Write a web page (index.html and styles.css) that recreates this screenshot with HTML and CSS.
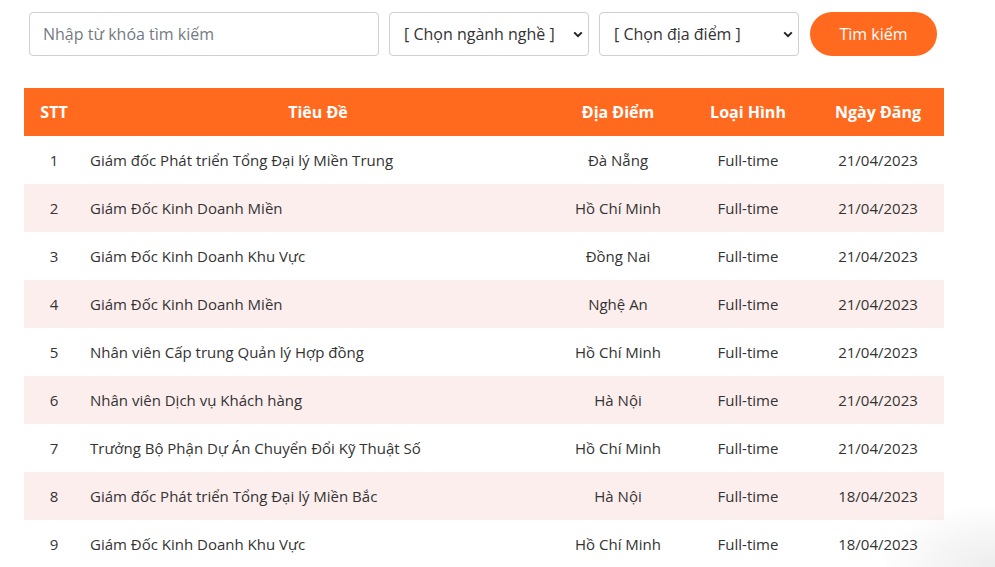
FILE: index.html
```html
<!DOCTYPE html>
<html lang="vi">
<head>
<meta charset="utf-8">
<title>Tuyển dụng</title>
<link rel="stylesheet" href="styles.css">
</head>
<body>
<div class="page">
  <form class="search">
    <input class="field keyword" type="text" placeholder="Nhập từ khóa tìm kiếm">
    <select class="field pick">
      <option>[ Chọn ngành nghề ]</option>
    </select>
    <select class="field pick">
      <option>[ Chọn địa điểm ]</option>
    </select>
    <button class="btn" type="button">Tìm kiếm</button>
  </form>

  <table class="jobs">
    <thead>
      <tr>
        <th class="c-stt">STT</th>
        <th class="c-title">Tiêu Đề</th>
        <th class="c-loc">Địa Điểm</th>
        <th class="c-type">Loại Hình</th>
        <th class="c-date">Ngày Đăng</th>
      </tr>
    </thead>
    <tbody>
      <tr><td class="c-stt">1</td><td class="c-title">Giám đốc Phát triển Tổng Đại lý Miền Trung</td><td class="c-loc">Đà Nẵng</td><td class="c-type">Full-time</td><td class="c-date">21/04/2023</td></tr>
      <tr><td class="c-stt">2</td><td class="c-title">Giám Đốc Kinh Doanh Miền</td><td class="c-loc">Hồ Chí Minh</td><td class="c-type">Full-time</td><td class="c-date">21/04/2023</td></tr>
      <tr><td class="c-stt">3</td><td class="c-title">Giám Đốc Kinh Doanh Khu Vực</td><td class="c-loc">Đồng Nai</td><td class="c-type">Full-time</td><td class="c-date">21/04/2023</td></tr>
      <tr><td class="c-stt">4</td><td class="c-title">Giám Đốc Kinh Doanh Miền</td><td class="c-loc">Nghệ An</td><td class="c-type">Full-time</td><td class="c-date">21/04/2023</td></tr>
      <tr><td class="c-stt">5</td><td class="c-title">Nhân viên Cấp trung Quản lý Hợp đồng</td><td class="c-loc">Hồ Chí Minh</td><td class="c-type">Full-time</td><td class="c-date">21/04/2023</td></tr>
      <tr><td class="c-stt">6</td><td class="c-title">Nhân viên Dịch vụ Khách hàng</td><td class="c-loc">Hà Nội</td><td class="c-type">Full-time</td><td class="c-date">21/04/2023</td></tr>
      <tr><td class="c-stt">7</td><td class="c-title">Trưởng Bộ Phận Dự Án Chuyển Đổi Kỹ Thuật Số</td><td class="c-loc">Hồ Chí Minh</td><td class="c-type">Full-time</td><td class="c-date">21/04/2023</td></tr>
      <tr><td class="c-stt">8</td><td class="c-title">Giám đốc Phát triển Tổng Đại lý Miền Bắc</td><td class="c-loc">Hà Nội</td><td class="c-type">Full-time</td><td class="c-date">18/04/2023</td></tr>
      <tr><td class="c-stt">9</td><td class="c-title">Giám Đốc Kinh Doanh Khu Vực</td><td class="c-loc">Hồ Chí Minh</td><td class="c-type">Full-time</td><td class="c-date">18/04/2023</td></tr>
    </tbody>
  </table>
</div>
<div class="corner-shadow"></div>
</body>
</html>
```

FILE: styles.css
```css
html, body {
  margin: 0;
  padding: 0;
  background: #ffffff;
}

body {
  font-family: "Open Sans", "Liberation Sans", sans-serif;
  color: #333333;
  overflow: hidden;
  height: 567px;
  position: relative;
}

.page {
  padding: 12px 0 0 24px;
  height: 555px;
  overflow: hidden;
}

.search {
  display: flex;
  gap: 10px;
  margin: 0 0 32px 5px;
  height: 44px;
}

.field {
  box-sizing: border-box;
  height: 44px;
  border: 1px solid #cfcfcf;
  border-radius: 4px;
  background-color: #fff;
  font-family: "Open Sans", "Liberation Sans", sans-serif;
  font-size: 16px;
  color: #333;
  outline: none;
  margin: 0;
}

.keyword {
  width: 350px;
  padding: 0 13px;
}

.keyword::placeholder {
  color: #737b82;
}

.pick {
  width: 200px;
  padding: 0 30px 0 14px;
  appearance: none;
  -webkit-appearance: none;
  background-image: url("data:image/svg+xml,%3Csvg xmlns='http://www.w3.org/2000/svg' width='10' height='7' viewBox='0 0 10 7'%3E%3Cpath d='M1.2 1.4 L5 5.2 L8.8 1.4' fill='none' stroke='%23222' stroke-width='2'/%3E%3C/svg%3E");
  background-repeat: no-repeat;
  background-position: right 5px center;
  background-size: 10px 7px;
}

.btn {
  box-sizing: border-box;
  width: 127px;
  height: 44px;
  margin-left: 1px;
  border: none;
  border-radius: 22px;
  background: #ff6a1f;
  color: #ffffff;
  font-family: "Open Sans", "Liberation Sans", sans-serif;
  font-size: 16px;
  padding: 0;
}

.jobs {
  width: 920px;
  border-collapse: collapse;
  table-layout: fixed;
  font-size: 15px;
}

.jobs th {
  background: #ff6a1f;
  color: #ffffff;
  font-weight: 700;
  font-size: 16px;
  height: 48px;
  padding: 0;
  text-align: center;
}

.jobs td {
  height: 48px;
  padding: 0;
  text-align: center;
  color: #333;
}

.jobs tbody tr:nth-child(even) td {
  background: #fdeeee;
}

.c-stt { width: 60px; }
.c-title { width: 468px; }
.c-loc { width: 132px; }
.c-type { width: 128px; }
.c-date { width: 132px; }

.jobs td.c-title {
  text-align: left;
  padding-left: 6px;
}

.corner-shadow {
  position: absolute;
  right: 0;
  bottom: 0;
  width: 110px;
  height: 60px;
  pointer-events: none;
  background: radial-gradient(ellipse at 100% 100%, rgba(0, 0, 0, 0.07) 0%, rgba(0, 0, 0, 0.03) 45%, rgba(0, 0, 0, 0) 75%);
}
```
